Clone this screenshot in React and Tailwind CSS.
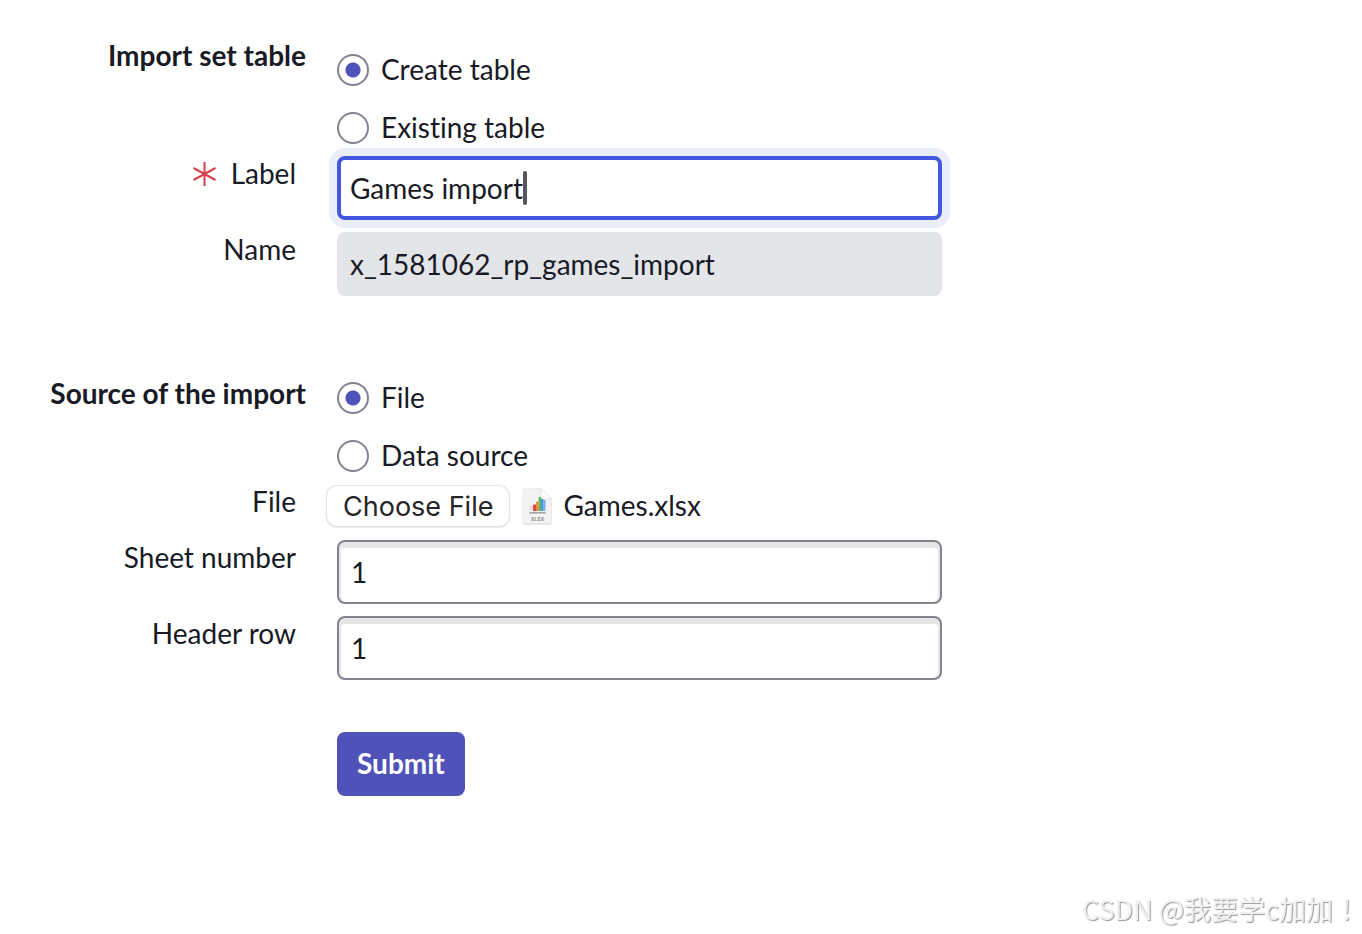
import { useRef, useState } from "react";

const fieldClass =
  "block h-16 w-full max-w-[605px] rounded-lg text-[28px] text-[#181a25] outline-none";

const numberClass =
  "border-2 border-[#81838f] bg-white px-3 shadow-[inset_0_6px_0_#e6e6e6,inset_2px_0_0_#e6e6e6,inset_-2px_0_0_#e6e6e6]";

const Row = ({ label, htmlFor, required, children }) => (
  <div className="grid grid-cols-[296px_1fr] gap-x-[30px]">
    <label htmlFor={htmlFor} className="flex items-start justify-end gap-3.5">
      {required && <RequiredIcon />}
      {label}
    </label>
    {children}
  </div>
);

const RequiredIcon = () => (
  <svg viewBox="0 0 24 24" className="mt-1.5 size-6" aria-hidden="true">
    <path
      d="M11.5 0V24M0.5 6L22.5 18M22.5 6L0.5 18"
      stroke="#d6404a"
      strokeWidth="2"
      fill="none"
    />
  </svg>
);

const XlsxIcon = () => (
  <svg viewBox="0 0 32 38" className="h-[38px] w-8" aria-hidden="true">
    <path
      d="M2.5 2.5H20L30.5 12.5V36Q30.5 37.5 29 37.5H3.5Q2 37.5 2 36V3Q2 2.5 2.5 2.5Z"
      fill="#d4d4d4"
    />
    <path
      d="M2 1.5H20L30.5 12V35Q30.5 36.5 29 36.5H3.5Q2 36.5 2 35V2Q2 1.5 2.5 1.5Z"
      fill="#f3f3f3"
      stroke="#e6e6e6"
      strokeWidth="0.6"
    />
    <path d="M20 1.5L30.5 12H21.5Q20 12 20 10.5Z" fill="#fdfdfd" stroke="#dadada" strokeWidth="0.6" />
    <path d="M10 19V24" stroke="#c9b0b8" strokeWidth="1.2" strokeDasharray="1.5 1" />
    <rect x="12" y="17.5" width="3" height="6.5" fill="#e2474c" />
    <rect x="15" y="14.5" width="2.6" height="9.5" fill="#f28a2e" />
    <rect x="17.6" y="10" width="2.6" height="14" fill="#5bb55a" />
    <rect x="20.2" y="12" width="2.2" height="12" fill="#3a8fe0" />
    <rect x="22.4" y="13" width="2" height="11" fill="#78a9e8" />
    <rect x="8.5" y="25" width="16" height="1.6" fill="#a6a6a6" />
    <text
      x="16.5"
      y="33.5"
      textAnchor="middle"
      fontSize="5"
      fontWeight="700"
      fontFamily="Inter, sans-serif"
      fill="#8c8c8c"
    >
      XLSX
    </text>
  </svg>
);

const RadioOption = ({ name, label, checked, onChange }) => (
  <label className="flex h-8 items-center gap-3">
    <input
      type="radio"
      name={name}
      checked={checked}
      onChange={onChange}
      className="size-8 appearance-none rounded-full border-2 border-[#81838f] bg-white checked:bg-[radial-gradient(circle,#4f52b8_7px,transparent_8px)]"
    />
    <span className="pb-0.5">{label}</span>
  </label>
);

const App = () => {
  const [tableMode, setTableMode] = useState("create");
  const [source, setSource] = useState("file");
  const [label, setLabel] = useState("Games import");
  const [sheet, setSheet] = useState("1");
  const [header, setHeader] = useState("1");
  const [fileName, setFileName] = useState("Games.xlsx");
  const fileRef = useRef(null);

  return (
    <main className="min-h-screen bg-white font-['Lato',sans-serif] text-[28px] leading-[34px] text-[#181a25] [font-variant-ligatures:none]">
      <form
        onSubmit={(e) => e.preventDefault()}
        className="flex flex-col gap-3 pt-[38px] pr-8"
      >
        {/* Import set table */}
        <div
          role="radiogroup"
          aria-labelledby="table-heading"
          className="grid grid-cols-[306px_1fr] gap-x-5"
        >
          <h2 id="table-heading" className="text-right font-bold">
            Import set table
          </h2>
          <div className="flex flex-col gap-[26px] pt-4 pl-[11px]">
            <RadioOption
              name="table"
              label="Create table"
              checked={tableMode === "create"}
              onChange={() => setTableMode("create")}
            />
            <RadioOption
              name="table"
              label="Existing table"
              checked={tableMode === "existing"}
              onChange={() => setTableMode("existing")}
            />
          </div>
        </div>

        <Row label="Label" htmlFor="label" required>
          <div className="relative pl-[11px]">
            <input
              id="label"
              type="text"
              value={label}
              onChange={(e) => setLabel(e.target.value)}
              className={`${fieldClass} border-4 border-[#4358df] bg-white px-[9px] caret-transparent shadow-[0_0_0_8px_#ebedfb]`}
            />
            {label === "Games import" && (
              <span className="absolute top-[15px] left-[197px] h-[34px] w-1 rounded-sm bg-[#55565e]" />
            )}
          </div>
        </Row>

        <Row label="Name" htmlFor="name">
          <div className="pl-[11px]">
            <input
              id="name"
              type="text"
              readOnly
              value="x_1581062_rp_games_import"
              className={`${fieldClass} bg-[#e4e5e9] px-[13px]`}
            />
          </div>
        </Row>

        {/* Source of the import */}
        <div
          role="radiogroup"
          aria-labelledby="source-heading"
          className="mt-[68px] grid grid-cols-[306px_1fr] gap-x-5"
        >
          <h2 id="source-heading" className="text-right font-bold">
            Source of the import
          </h2>
          <div className="flex flex-col gap-[26px] pt-1.5 pl-[11px]">
            <RadioOption
              name="source"
              label="File"
              checked={source === "file"}
              onChange={() => setSource("file")}
            />
            <RadioOption
              name="source"
              label="Data source"
              checked={source === "data"}
              onChange={() => setSource("data")}
            />
          </div>
        </div>

        <Row label="File" htmlFor="file">
          <div className="flex h-11 items-center pl-px">
            <button
              type="button"
              onClick={() => fileRef.current.click()}
              className="h-10 rounded-[10px] bg-white px-4 pt-0.5 font-['Inter',sans-serif] text-[27px] text-[#252525] shadow-[0_0_1px_1px_#e4e4e4,0_1px_2px_#b4b4b4]"
            >
              Choose File
            </button>
            <input
              id="file"
              ref={fileRef}
              type="file"
              className="hidden"
              onChange={(e) => setFileName(e.target.files[0]?.name ?? "")}
            />
            <span className="ml-3 flex items-center gap-2.5">
              <XlsxIcon />
              <span className="pb-0.5">{fileName}</span>
            </span>
          </div>
        </Row>

        <Row label="Sheet number" htmlFor="sheet">
          <div className="pl-[11px]">
            <input
              id="sheet"
              type="text"
              value={sheet}
              onChange={(e) => setSheet(e.target.value)}
              className={`${fieldClass} ${numberClass}`}
            />
          </div>
        </Row>

        <Row label="Header row" htmlFor="header">
          <div className="pl-[11px]">
            <input
              id="header"
              type="text"
              value={header}
              onChange={(e) => setHeader(e.target.value)}
              className={`${fieldClass} ${numberClass}`}
            />
          </div>
        </Row>

        <div className="mt-10 pl-[337px]">
          <button
            type="submit"
            className="h-16 rounded-lg bg-[#4f52b8] px-5 pb-0.5 font-bold text-white"
          >
            Submit
          </button>
        </div>
      </form>

      <p className="fixed right-0.5 bottom-2 font-['Noto_Sans_CJK_TC',sans-serif] text-[27px] text-[#f0f0f0] [text-shadow:1px_1px_1px_#999]">
        CSDN @我要学c加加！
      </p>
    </main>
  );
};

export default App;
